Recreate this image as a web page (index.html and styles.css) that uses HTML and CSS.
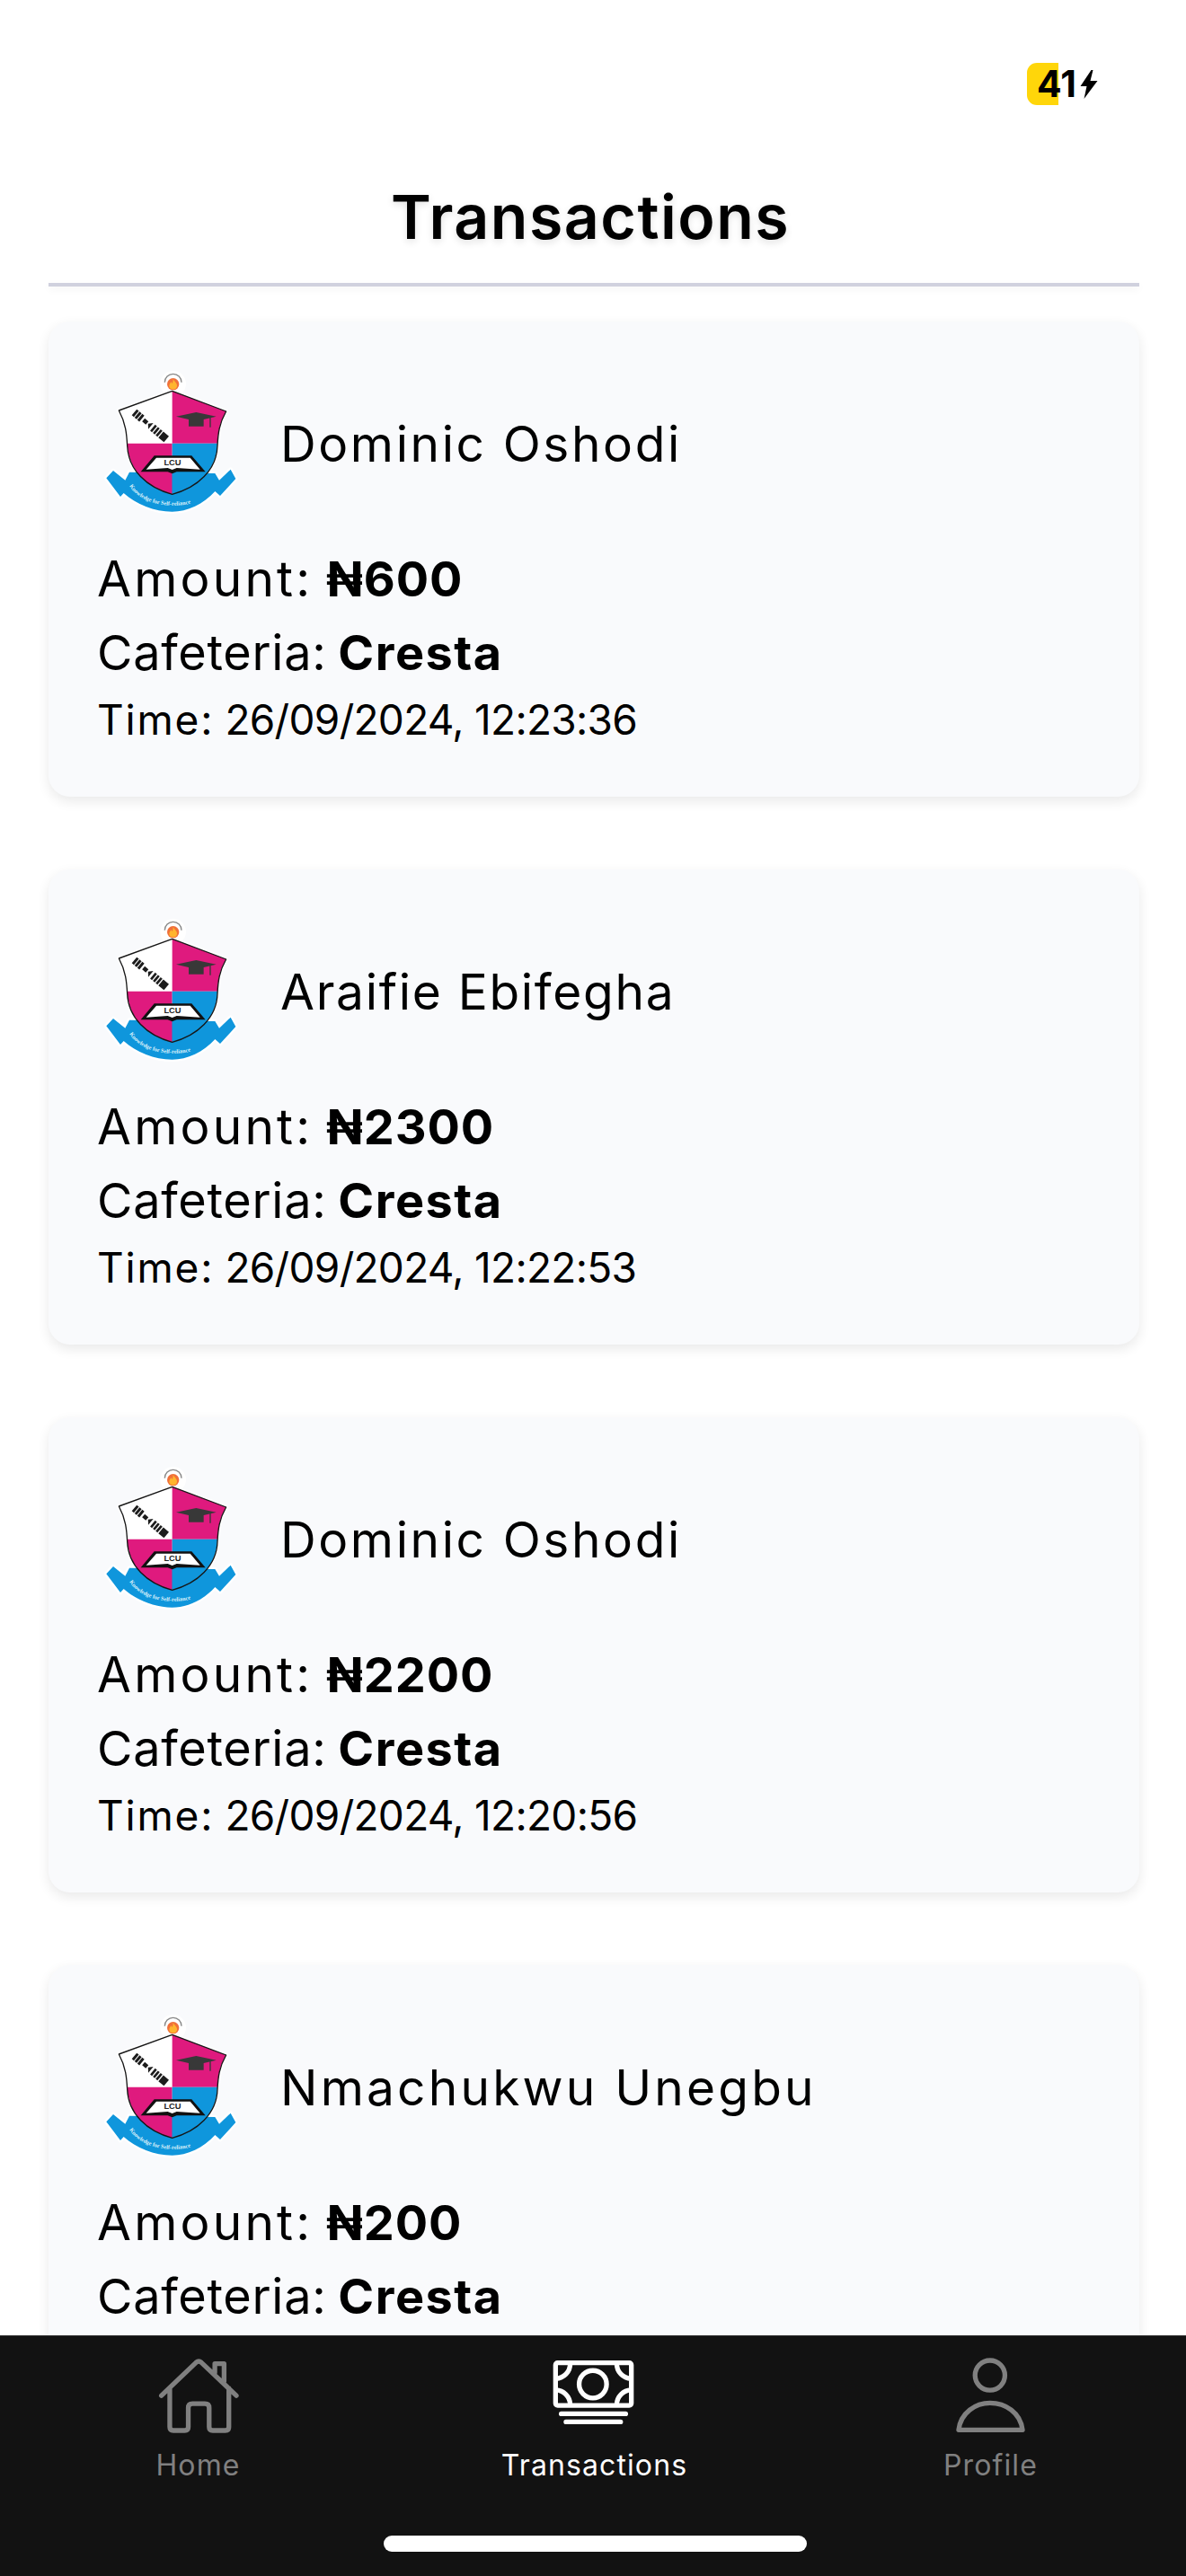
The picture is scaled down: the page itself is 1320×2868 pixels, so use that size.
FILE: index.html
```html
<!DOCTYPE html>
<html lang="en">
<head>
<meta charset="utf-8">
<title>Transactions</title>
<link rel="stylesheet" href="styles.css">
</head>
<body>
<svg class="defs" width="0" height="0" aria-hidden="true">
  <defs>
    <symbol id="crest" viewBox="225 220 450 480">
      <g class="halo">
        <circle cx="458" cy="263" r="36"/>
        <path d="M455 287 L635 355 C612 395 608 430 606 470 C604 550 540 610 455 632 C370 610 308 550 305 470 C303 430 300 395 277 352 Z"/>
        <path d="M235 578 L258 553 L298 585 L312 558 L598 562 L612 585 L650 549 L667 580 L615 637 L598 622 C560 665 505 690 455 690 C395 690 335 665 293 628 L282 640 Z"/>
      </g>
      <path class="arc" d="M430 258 A28 28 0 0 1 486 258"/>
      <circle class="flame-bg" cx="458" cy="264" r="20"/>
      <path class="flame" d="M458 246 C462 256 472 260 471 270 C470 279 464 281 458 281 C451 281 445 278 445 270 C445 264 449 262 451 256 C453 259 454 261 455 262 C457 258 458 252 458 246 Z"/>
      <path class="blue" d="M235 578 L258 553 L298 585 L312 558 L598 562 L612 585 L650 549 L667 580 L615 637 L598 622 C560 665 505 690 455 690 C395 690 335 665 293 628 L282 640 Z"/>
      <path class="paper" d="M455 287 L277 352 C300 395 303 430 305 462 L455 462 Z"/>
      <path class="pink" d="M455 287 L635 355 C612 395 608 430 606 462 L455 462 Z"/>
      <path class="pink" d="M305 462 C308 550 370 610 455 632 L455 462 Z"/>
      <path class="blue" d="M606 462 C604 550 540 610 455 632 L455 462 Z"/>
      <path class="outline" d="M455 287 L635 355 C612 395 608 430 606 470 C604 550 540 610 455 632 C370 610 308 550 305 470 C303 430 300 395 277 352 Z"/>
      <g class="ink" transform="rotate(40 382 403)">
        <rect x="312" y="390" width="9" height="26"/>
        <rect x="324" y="390" width="9" height="26"/>
        <rect x="336" y="390" width="9" height="26"/>
        <rect x="352" y="396" width="16" height="14"/>
        <path d="M372 403 L384 390 L384 416 Z"/>
        <rect x="392" y="390" width="8" height="26"/>
        <rect x="404" y="390" width="8" height="26"/>
        <rect x="416" y="390" width="8" height="26"/>
        <rect x="428" y="390" width="24" height="26"/>
      </g>
      <path class="cap" d="M468 372 L535 358 L602 372 L560 382 L560 405 L510 405 L510 382 Z"/>
      <path class="tassel" d="M582 374 L582 408"/>
      <path class="book-edge" d="M350 557 L395 503 L520 503 L566 557 L470 557 L455 563 L440 557 Z"/>
      <path class="book-page" d="M368 549 L402 510 L515 510 L548 549 L470 544 L455 550 L440 544 Z"/>
      <text class="crest-lcu" x="456" y="535" text-anchor="middle">LCU</text>
      <path id="crest-motto" class="motto-path" d="M312 604 C365 690 545 690 592 612"/>
      <text class="crest-motto"><textPath href="#crest-motto">Knowledge for Self-reliance</textPath></text>
    </symbol>
  </defs>
</svg>

<main class="screen">
  <div class="status">
    <div class="battery">
      <span class="battery-level">41</span>
      <svg class="bolt" viewBox="0 0 20 32"><path d="M13 0 L1 18 L8 18 L5 32 L20 12 L12 12 L15 0 Z"/></svg>
    </div>
  </div>

  <header class="header">
    <h1 class="title">Transactions</h1>
    <div class="rule"></div>
  </header>

  <section class="list">
    <article class="card">
      <div class="who">
        <svg class="crest"><use href="#crest"/></svg>
        <h2 class="name">Dominic Oshodi</h2>
      </div>
      <p class="line amount">Amount: <b>₦600</b></p>
      <p class="line cafe">Cafeteria: <b>Cresta</b></p>
      <p class="time"><span class="time-label">Time:</span> 26/09/2024, 12:23:36</p>
    </article>
    <article class="card">
      <div class="who">
        <svg class="crest"><use href="#crest"/></svg>
        <h2 class="name name-tight">Araifie Ebifegha</h2>
      </div>
      <p class="line amount">Amount: <b>₦2300</b></p>
      <p class="line cafe">Cafeteria: <b>Cresta</b></p>
      <p class="time"><span class="time-label">Time:</span> 26/09/2024, 12:22:53</p>
    </article>
    <article class="card">
      <div class="who">
        <svg class="crest"><use href="#crest"/></svg>
        <h2 class="name">Dominic Oshodi</h2>
      </div>
      <p class="line amount">Amount: <b>₦2200</b></p>
      <p class="line cafe">Cafeteria: <b>Cresta</b></p>
      <p class="time"><span class="time-label">Time:</span> 26/09/2024, 12:20:56</p>
    </article>
    <article class="card">
      <div class="who">
        <svg class="crest"><use href="#crest"/></svg>
        <h2 class="name name-wide">Nmachukwu Unegbu</h2>
      </div>
      <p class="line amount">Amount: <b>₦200</b></p>
      <p class="line cafe">Cafeteria: <b>Cresta</b></p>
    </article>
  </section>
</main>

<nav class="tabs">
  <div class="tab">
    <svg class="tab-icon" viewBox="60 40 290 265"><path d="M82 173 L198 62 Q207 54 216 62 L333 173 M110 148 L110 278 Q110 290 122 290 L160 290 Q172 290 172 278 L172 214 Q172 200 186 200 L228 200 Q242 200 242 214 L242 278 Q242 290 254 290 L296 290 Q308 290 308 278 L308 148 M261 96 L261 66 L292 66 L292 124"/></svg>
    <span class="tab-label">Home</span>
  </div>
  <div class="tab active">
    <svg class="tab-icon" viewBox="160 80 290 265"><rect x="175" y="103" width="254" height="143" rx="7"/><circle cx="300" cy="175" r="46"/><path d="M176 156 A50 50 0 0 0 224 106 M380 106 A50 50 0 0 0 428 156 M176 194 A50 50 0 0 1 224 243 M380 243 A50 50 0 0 1 428 194 M194 274 L410 274 M210 301 L393 301"/></svg>
    <span class="tab-label">Transactions</span>
  </div>
  <div class="tab">
    <svg class="tab-icon" viewBox="70 40 290 265"><circle cx="213" cy="105" r="50"/><path d="M108 288 C115 230 165 198 213 198 C265 198 315 230 322 288 Z"/></svg>
    <span class="tab-label">Profile</span>
  </div>
  <div class="home-bar"></div>
</nav>
</body>
</html>
```
FILE: styles.css
```css
* { box-sizing: border-box; }

html, body { margin: 0; padding: 0; }

body {
  position: relative;
  width: 1320px;
  height: 2868px;
  overflow: hidden;
  background: #fff;
  color: #000;
  font-family: Inter, "Open Sans", sans-serif;
}

.defs { position: absolute; }

.screen {
  height: 2600px;
  overflow: hidden;
  padding: 0 52px 0 54px;
}

/* status bar */
.status {
  display: flex;
  justify-content: flex-end;
  height: 117px;
  padding: 70px 49px 0 0;
}

.battery {
  position: relative;
  display: flex;
  align-items: center;
  height: 47px;
  padding-left: 11px;
  width: 76px;
}

.battery::before {
  content: "";
  position: absolute;
  left: 0;
  top: 0;
  width: 35px;
  height: 47px;
  background: #ffd60a;
  border-radius: 11px 0 0 11px;
}

.battery-level {
  position: relative;
  font-size: 41px;
  font-weight: 700;
  line-height: 47px;
}

.bolt {
  flex: none;
  width: 21px;
  height: 32px;
  margin-left: 3px;
  fill: #000;
}

/* header */
.header {
  height: 241px;
}

.title {
  margin: 0;
  height: 198px;
  padding: 87px 8px 0 0;
  font-size: 68px;
  font-weight: 600;
  line-height: 74px;
  letter-spacing: 1.5px;
  text-align: center;
  text-shadow: 0 3px 8px rgba(0, 0, 0, 0.12);
}

.rule {
  height: 4px;
  background: #d0d1de;
  box-shadow: 0 3px 8px rgba(0, 0, 0, 0.06);
}

/* cards */
.list {
  display: flex;
  flex-direction: column;
  gap: 81px;
}

.card {
  min-height: 529px;
  padding: 55px 54px 0;
  background: #f9fafc;
  border-radius: 24px;
  box-shadow: 0 5px 14px rgba(0, 0, 0, 0.09);
}

.who {
  display: flex;
  align-items: center;
  gap: 47px;
  height: 160px;
  margin-bottom: 30px;
  padding-left: 7px;
}

.crest {
  flex: none;
  width: 150px;
  height: 160px;
}

.halo { fill: #fff; stroke: #fff; stroke-width: 14; stroke-linejoin: round; }
.arc { fill: none; stroke: #888; stroke-width: 4; }
.flame-bg { fill: #f0703a; }
.flame { fill: #ffb52e; }
.paper { fill: #fff; }
.pink { fill: #df1a7e; }
.blue { fill: #0f96dc; }
.outline { fill: none; stroke: #161616; stroke-width: 4; stroke-linejoin: round; }
.ink { fill: #1c1c1c; }
.cap { fill: #383838; }
.tassel { fill: none; stroke: #383838; stroke-width: 4; }
.book-edge { fill: #111; }
.book-page { fill: #fff; }
.crest-lcu { font-family: "Liberation Sans", sans-serif; font-size: 28px; font-weight: 700; fill: #222; }
.motto-path { fill: none; }
.crest-motto { font-family: "Liberation Serif", serif; font-size: 19px; font-weight: 700; fill: #dff2fb; }

.name {
  margin: 0;
  padding-top: 1px;
  font-size: 55px;
  font-weight: 400;
  letter-spacing: 2.6px;
  white-space: nowrap;
}

.name-tight { letter-spacing: 1.7px; }
.name-wide { letter-spacing: 3.2px; }

.line {
  margin: 0;
  font-size: 54px;
  line-height: 82px;
  letter-spacing: 0.7px;
  word-spacing: -3px;
  white-space: nowrap;
}

.amount { font-size: 55px; letter-spacing: 3.2px; word-spacing: -4px; }

.line b {
  font-size: 54px;
  font-weight: 700;
  letter-spacing: 1.5px;
}

.amount b { letter-spacing: 0.9px; }

.time {
  margin: 0;
  font-size: 46px;
  line-height: 66px;
  letter-spacing: -0.7px;
  white-space: nowrap;
}

.time-label { letter-spacing: 1.8px; }

/* bottom tabs */
.tabs {
  position: relative;
  display: grid;
  grid-template-columns: repeat(3, 441px);
  height: 268px;
  overflow: hidden;
  background: #121212;
  border-top: 1px solid #333;
}

.tab {
  display: flex;
  flex-direction: column;
  align-items: center;
  padding-top: 22px;
  color: #808080;
}

.tab.active { color: #fff; }

.tab-icon {
  width: 97px;
  height: 88px;
  fill: none;
  stroke: currentColor;
  stroke-width: 16;
  stroke-linecap: round;
  stroke-linejoin: round;
}

.tab-label {
  margin-top: 14px;
  font-size: 32px;
  line-height: 40px;
  letter-spacing: 1.1px;
}

.home-bar {
  position: absolute;
  left: 427px;
  top: 222px;
  width: 471px;
  height: 18px;
  border-radius: 9px;
  background: #fff;
}
```
